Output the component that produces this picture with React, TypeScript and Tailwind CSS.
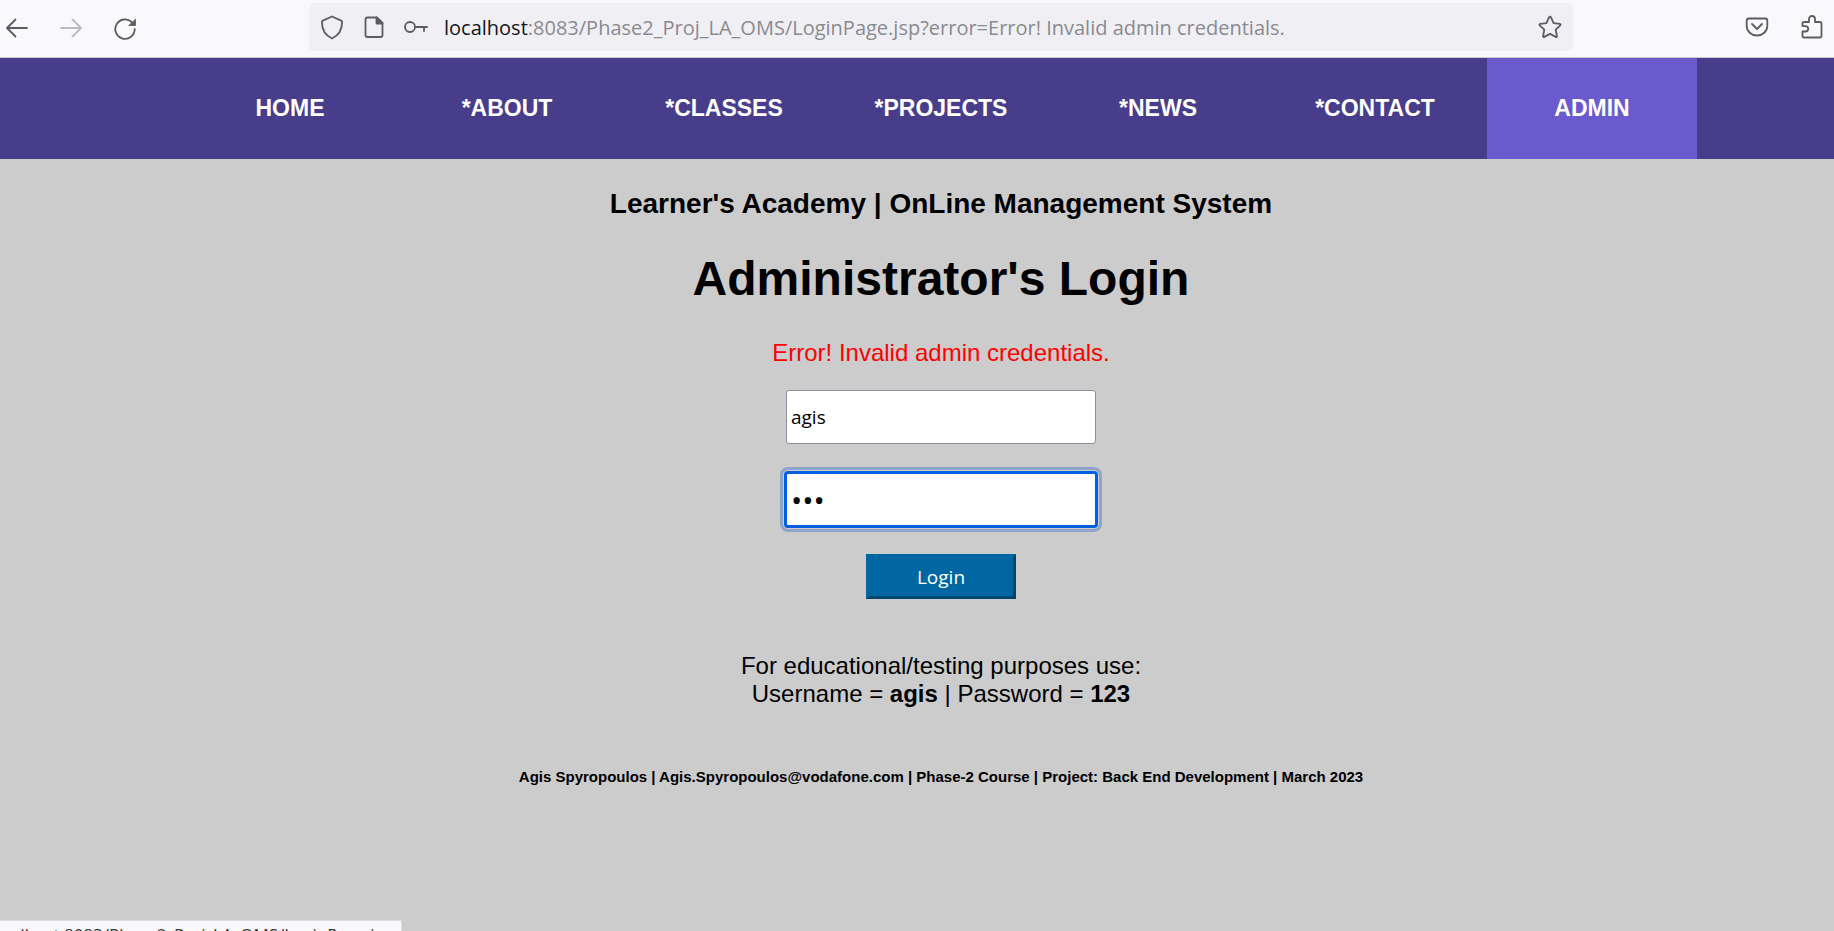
import React from "react";

const navItems = [
  { label: "HOME" },
  { label: "*ABOUT" },
  { label: "*CLASSES" },
  { label: "*PROJECTS" },
  { label: "*NEWS" },
  { label: "*CONTACT" },
  { label: "ADMIN", active: true },
];

type IconProps = { className?: string; children: React.ReactNode };

function Icon({ className = "text-[#5b5b66]", children }: IconProps) {
  return (
    <svg
      viewBox="0 0 24 24"
      className={`size-6 shrink-0 overflow-visible ${className}`}
      fill="none"
      stroke="currentColor"
      strokeWidth="1.8"
      strokeLinecap="round"
      strokeLinejoin="round"
      aria-hidden="true"
    >
      {children}
    </svg>
  );
}

function BrowserBar() {
  return (
    <header className="flex h-[58px] items-start border-b border-[#cccccc] bg-[#f9f9fb] pt-[3px]">
      <div className="flex h-12 w-[309px] shrink-0 items-center gap-[30px] pl-[5px]">
        <button type="button" aria-label="Back" className="flex">
          <Icon>
            <path d="M22 13H2.5M10.5 4.500L2 13l8.500 8.500" />
          </Icon>
        </button>
        <button type="button" aria-label="Forward" disabled className="flex">
          <Icon className="text-[#bcbcc1]">
            <path d="M2 13h19.500M13.500 4.500L22 13l-8.500 8.500" />
          </Icon>
        </button>
        <button type="button" aria-label="Reload" className="flex">
          <Icon>
            <path d="M18.800 7.200A9.700 9.700 0 1 0 21.700 14" />
            <path d="M22.500 4.500V10.500H16z" fill="currentColor" strokeWidth="0.8" />
          </Icon>
        </button>
      </div>
      <div className="flex h-12 min-w-0 flex-1 items-center rounded-[5px] bg-[#f0f0f4] pr-[11px] pl-[11px]">
        <Icon>
          <path d="M12 1.500l9.200 4.100q.900.400.900 1.400C22 14 18.500 20.500 12 23.500 5.500 20.500 2 14 1.900 7q0-1 .900-1.400z" />
        </Icon>
        <Icon className="ml-[18px] text-[#5b5b66]">
          <path d="M5.500 2.500h9.500l5.500 5.500v12q0 2-2 2h-13q-2 0-2-2v-15.500q0-2 2-2z" />
          <path d="M14.500 2.500v6h6z" fill="currentColor" />
        </Icon>
        <Icon className="ml-[18px] text-[#5b5b66]">
          <circle cx="6" cy="12" r="5" />
          <path d="M11 12h12M20 12v4" />
        </Icon>
        <span className="ml-4 min-w-0 flex-1 truncate pt-0.5 font-['Open_Sans',sans-serif] text-xl leading-7 text-[#8a8a90]">
          <span className="text-[#15141a]">localhost</span>
          :8083/Phase2_Proj_LA_OMS/LoginPage.jsp?error=Error! Invalid admin credentials.
        </span>
        <button type="button" aria-label="Bookmark this page" className="flex">
          <Icon>
            <path d="M12 1.700q.7 0 1 .7l2.600 5.700 6.200.800q1.300.300.500 1.400l-4.600 4.400 1.200 6.300q.100 1.400-1.200.900L12 18.900l-5.700 3q-1.300.500-1.200-.900l1.200-6.300L1.700 10.300q-.8-1.100.5-1.400l6.200-.8L11 2.400q.3-.7 1-.7z" />
          </Icon>
        </button>
      </div>
      <div className="flex h-12 w-[261px] shrink-0 items-center justify-end gap-[31px] pr-[10px]">
        <button type="button" aria-label="Save to Pocket" className="flex">
          <Icon>
            <path d="M4 3.500h16q2.300 0 2.300 2.300v5.200a10.300 9.500 0 0 1-20.600 0V5.800q0-2.300 2.300-2.300z" />
            <path d="M7 9l5 5 5-5" />
          </Icon>
        </button>
        <button type="button" aria-label="Extensions" className="flex">
          <Icon>
            <path d="M4 7h5V4a3 3 0 0 1 6 0v3h5q1.500 0 1.500 1.500v12.500q0 1.500-1.500 1.500H4q-1.500 0-1.500-1.500v-4.500h3a2.700 2.700 0 0 0 0-5.400h-3V8.500Q2.500 7 4 7z" />
          </Icon>
        </button>
      </div>
    </header>
  );
}

function MainNav() {
  return (
    <nav className="bg-[#483d8b] pl-12">
      <ul className="flex justify-center gap-[7px]">
        {navItems.map((item) => (
          <li key={item.label}>
            <a
              href="#"
              className={`flex h-[101px] w-[210px] justify-center pt-9 text-[23px] leading-7 font-bold text-white ${
                item.active ? "bg-[#6a5acd]" : ""
              }`}
            >
              {item.label}
            </a>
          </li>
        ))}
      </ul>
    </nav>
  );
}

function LoginForm() {
  return (
    <form className="flex flex-col items-center" onSubmit={(e) => e.preventDefault()}>
      <input
        type="text"
        aria-label="Username"
        defaultValue="agis"
        className="mt-[23px] h-[54px] w-[310px] rounded-[3px] border border-[#8f8f9d] bg-white px-1 font-['Open_Sans',sans-serif] text-[19px] text-black outline-none"
      />
      <input
        type="password"
        aria-label="Password"
        defaultValue="123"
        className="mt-[27px] h-[57px] w-[314px] rounded-[4px] border-3 border-[#0060df] bg-white px-1 font-['Open_Sans',sans-serif] text-[30px] text-black outline-3 outline-offset-1 outline-[#8fa4cb]"
      />
      <button
        type="submit"
        className="mt-[26px] h-[45px] w-[150px] border-3 border-t-[#0067a3] border-r-[#00466d] border-b-[#00466d] border-l-[#0067a3] bg-[#0067a3] pt-0.5 font-['Open_Sans',sans-serif] text-[19px] text-white"
      >
        Login
      </button>
    </form>
  );
}

export default function App() {
  return (
    <div className="relative flex min-h-screen flex-col overflow-hidden bg-[#cccccc] font-['Liberation_Sans',Arial,sans-serif] text-black">
      <BrowserBar />
      <MainNav />
      <main className="flex flex-col items-center pl-12 text-center">
        <h2 className="mt-7 text-[28px] leading-[34px] font-bold">
          Learner's Academy | OnLine Management System
        </h2>
        <h1 className="mt-[30px] text-5xl leading-14 font-bold">Administrator's Login</h1>
        <p role="alert" className="mt-8 text-2xl leading-7 text-[#ff0000]">
          Error! Invalid admin credentials.
        </p>
        <LoginForm />
        <p className="mt-[53px] text-2xl leading-7">
          For educational/testing purposes use:
          <br />
          Username = <b>agis</b> | Password = <b>123</b>
        </p>
        <footer className="mt-[60px] text-[15px] leading-[18px] font-bold">
          Agis Spyropoulos | Agis.Spyropoulos@vodafone.com | Phase-2 Course | Project: Back End
          Development | March 2023
        </footer>
      </main>
      <div className="absolute bottom-0 left-0 flex h-[11px] w-[402px] justify-end overflow-hidden border-t border-r border-[#dcdcdc] bg-[#f9f9fb] pr-2 font-['Open_Sans',sans-serif] text-[17px] leading-7 whitespace-nowrap text-[#38383d]">
        localhost:8083/Phase2_Proj_LA_OMS/LoginPage.jsp
      </div>
    </div>
  );
}
